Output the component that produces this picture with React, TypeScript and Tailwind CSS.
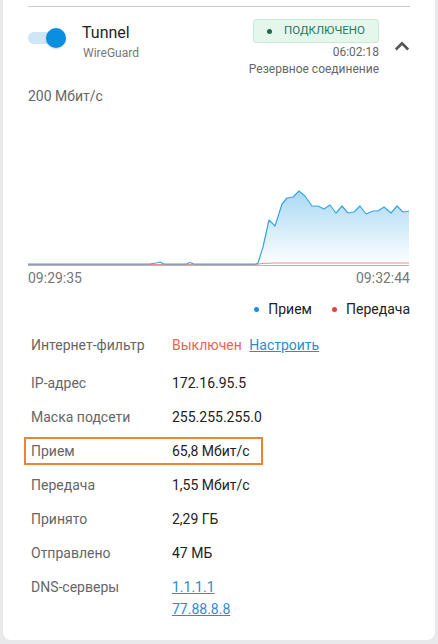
const rxPoints: [number, number][] = [
  [28, 262], [150, 262], [156, 261], [160, 260], [164, 262], [186, 262], [190, 260.5], [194, 262],
  [256, 262], [258, 261], [263, 245], [269, 218], [275, 224], [282, 202], [287, 196], [293, 195],
  [299, 189], [305, 194], [312, 204], [318, 204], [324, 207], [330, 203], [336, 211], [342, 204],
  [348, 211], [354, 210], [360, 204], [366, 212], [373, 209], [378, 209], [384, 205], [391, 211],
  [397, 204], [403, 210], [409, 209],
];

const txPoints: [number, number][] = [
  [28, 262.5], [256, 262.5], [262, 261.5], [275, 261], [409, 261],
];

const toPath = (pts: [number, number][]) =>
  pts.map(([x, y], i) => `${i === 0 ? "M" : "L"}${x} ${y}`).join(" ");

const TrafficChart = () => {
  const rx = toPath(rxPoints);
  return (
    <svg width="381" height="160" viewBox="0 0 381 160" className="block">
      <defs>
        <linearGradient id="rxFill" x1="0" y1="0" x2="0" y2="1">
          <stop offset="0%" stopColor="#a9d8f3" />
          <stop offset="100%" stopColor="#ffffff" />
        </linearGradient>
      </defs>
      <g transform="translate(-28,-104)">
        <path d={`${rx} L409 263 L28 263 Z`} fill="url(#rxFill)" />
        <line x1="28" y1="263.5" x2="409" y2="263.5" stroke="#b5b5b5" strokeWidth="1" />
        <path d={toPath(txPoints)} fill="none" stroke="#ef8f8f" strokeWidth="1" />
        <path d={rx} fill="none" stroke="#3ba5e2" strokeWidth="1.2" strokeLinejoin="round" />
      </g>
    </svg>
  );
};

const Row = ({ label, children }: { label: string; children: React.ReactNode }) => (
  <div className="flex h-[34px] items-center pl-[3px]">
    <div className="w-[141px] text-[#666]">{label}</div>
    <div className="text-[#222]">{children}</div>
  </div>
);

export default function App() {
  return (
    <div className="h-[644px] bg-[#e9e9eb] px-[3px] pb-[4px] font-['Roboto',sans-serif] text-[14px]">
      <div className="h-full rounded-b-lg bg-white px-[25px] pt-[6px]">
        <div className="h-px bg-[#c9c9c9]" />

        {/* шапка */}
        <div className="mt-[12px] flex items-start justify-between">
          <div className="flex items-start">
            <div className="relative mt-[9px] h-[20px] w-[38px]">
              <div className="absolute left-0 top-[4px] h-[12px] w-[37px] rounded-full bg-[#cfe6f6]" />
              <div className="absolute right-0 top-0 h-[20px] w-[20px] rounded-full bg-[#0a8fe0] shadow-[0_1px_2px_rgba(0,0,0,0.2)]" />
            </div>
            <div className="ml-[16px] mt-[4px]">
              <div className="text-[16px] leading-[20px] text-[#1e1e1e]">Tunnel</div>
              <div className="ml-[1px] mt-[2px] text-[12px] leading-[16px] text-[#777]">WireGuard</div>
            </div>
          </div>
          <div className="flex items-start">
            <div className="flex flex-col items-end">
              <div className="flex h-[24px] w-[126px] items-center rounded-[3px] border border-[#c9ecd6] bg-[#e5f7ec] pl-[13px] text-[11.5px] text-[#26775a]">
                <span className="mr-[12px] h-[5px] w-[5px] rounded-full bg-[#1f6b43]" />
                ПОДКЛЮЧЕНО
              </div>
              <div className="mt-[1px] text-[12px] leading-[17px] text-[#666]">06:02:18</div>
              <div className="text-[12px] leading-[17px] text-[#666]">Резервное соединение</div>
            </div>
            <svg width="16" height="10" viewBox="0 0 16 10" className="ml-[15px] mt-[22px] text-[#555]">
              <path d="M1.8 8.5 L8 2.3 L14.2 8.5" fill="none" stroke="currentColor" strokeWidth="2.6" />
            </svg>
          </div>
        </div>

        {/* график */}
        <div className="mt-[8px] leading-[20px] text-[#666]">200 Мбит/с</div>
        <TrafficChart />
        <div className="mt-[2px] flex justify-between leading-[20px] text-[#777]">
          <span>09:29:35</span>
          <span>09:32:44</span>
        </div>
        <div className="mt-[11px] flex items-center justify-end leading-[20px] text-[#222]">
          <span className="mr-[9px] h-[5px] w-[5px] rounded-full bg-[#1592e0]" />
          <span>Прием</span>
          <span className="ml-[20px] mr-[9px] h-[5px] w-[5px] rounded-full bg-[#e0433f]" />
          <span>Передача</span>
        </div>

        {/* детали */}
        <div className="mt-[9px]">
          <div className="mb-[4px]">
            <Row label="Интернет-фильтр">
              <span className="text-[#f0624f]">Выключен</span>{" "}
              <a className="ml-[4px] text-[#2a8bd8] underline">Настроить</a>
            </Row>
          </div>
          <Row label="IP-адрес">172.16.95.5</Row>
          <Row label="Маска подсети">255.255.255.0</Row>
          <div className="flex h-[34px] items-center">
            <div className="ml-[-4px] flex h-[28px] w-[239px] items-center border-2 border-[#f5812f] pl-[5px]">
              <div className="w-[141px] text-[#666]">Прием</div>
              <div className="text-[#222]">65,8 Мбит/с</div>
            </div>
          </div>
          <Row label="Передача">1,55 Мбит/с</Row>
          <Row label="Принято">2,29 ГБ</Row>
          <Row label="Отправлено">47 МБ</Row>
          <div className="flex pl-[3px] pt-[6px] leading-[22px]">
            <div className="w-[141px] text-[#666]">DNS-серверы</div>
            <div className="flex flex-col items-start text-[#2a8bd8]">
              <a className="underline">1.1.1.1</a>
              <a className="underline">77.88.8.8</a>
            </div>
          </div>
        </div>
      </div>
    </div>
  );
}
